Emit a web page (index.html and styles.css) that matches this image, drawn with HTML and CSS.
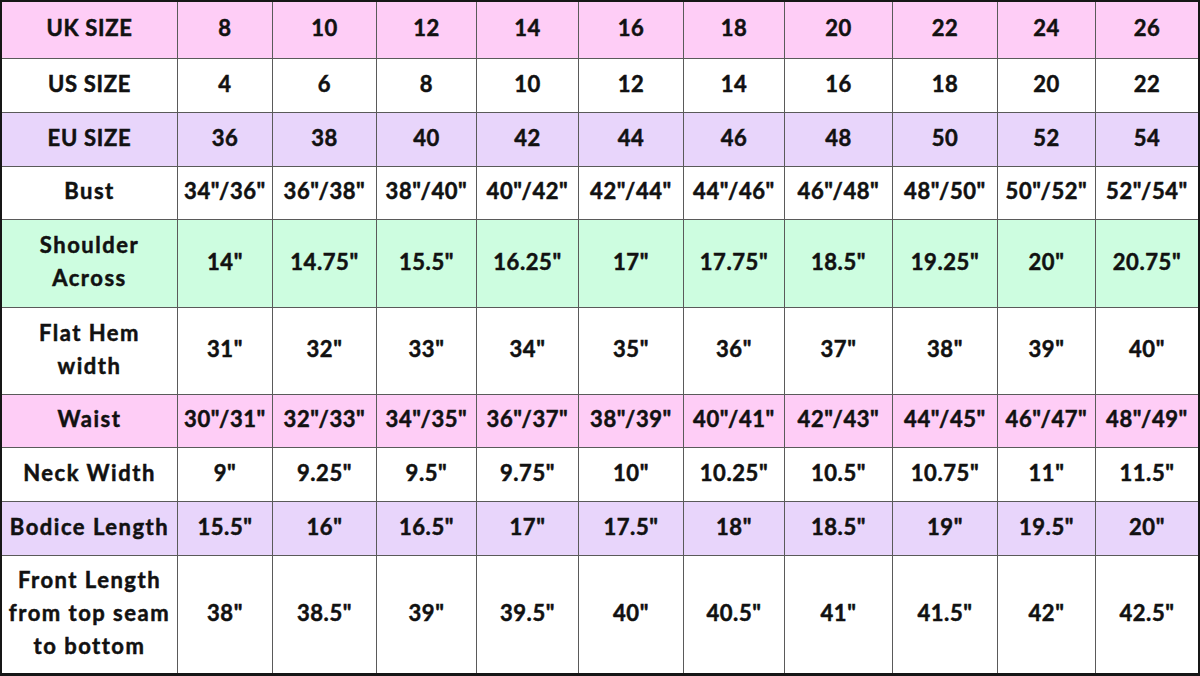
FILE: index.html
```html
<!DOCTYPE html>
<html lang="en">
<head>
<meta charset="utf-8">
<title>Size Chart</title>
<link rel="stylesheet" href="styles.css">
</head>
<body>
<div class="chart">
  <div class="cell label caps pink">UK SIZE</div>
  <div class="cell pink">8</div><div class="cell pink">10</div><div class="cell pink">12</div><div class="cell pink">14</div><div class="cell pink">16</div><div class="cell pink">18</div><div class="cell pink">20</div><div class="cell pink">22</div><div class="cell pink">24</div><div class="cell pink">26</div>

  <div class="cell label caps">US SIZE</div>
  <div class="cell">4</div><div class="cell">6</div><div class="cell">8</div><div class="cell">10</div><div class="cell">12</div><div class="cell">14</div><div class="cell">16</div><div class="cell">18</div><div class="cell">20</div><div class="cell">22</div>

  <div class="cell label caps lav">EU SIZE</div>
  <div class="cell lav">36</div><div class="cell lav">38</div><div class="cell lav">40</div><div class="cell lav">42</div><div class="cell lav">44</div><div class="cell lav">46</div><div class="cell lav">48</div><div class="cell lav">50</div><div class="cell lav">52</div><div class="cell lav">54</div>

  <div class="cell label">Bust</div>
  <div class="cell">34"/36"</div><div class="cell">36"/38"</div><div class="cell">38"/40"</div><div class="cell">40"/42"</div><div class="cell">42"/44"</div><div class="cell">44"/46"</div><div class="cell">46"/48"</div><div class="cell">48"/50"</div><div class="cell">50"/52"</div><div class="cell">52"/54"</div>

  <div class="cell label green">Shoulder<br>Across</div>
  <div class="cell green">14"</div><div class="cell green">14.75"</div><div class="cell green">15.5"</div><div class="cell green">16.25"</div><div class="cell green">17"</div><div class="cell green">17.75"</div><div class="cell green">18.5"</div><div class="cell green">19.25"</div><div class="cell green">20"</div><div class="cell green">20.75"</div>

  <div class="cell label">Flat Hem<br>width</div>
  <div class="cell">31"</div><div class="cell">32"</div><div class="cell">33"</div><div class="cell">34"</div><div class="cell">35"</div><div class="cell">36"</div><div class="cell">37"</div><div class="cell">38"</div><div class="cell">39"</div><div class="cell">40"</div>

  <div class="cell label pink">Waist</div>
  <div class="cell pink">30"/31"</div><div class="cell pink">32"/33"</div><div class="cell pink">34"/35"</div><div class="cell pink">36"/37"</div><div class="cell pink">38"/39"</div><div class="cell pink">40"/41"</div><div class="cell pink">42"/43"</div><div class="cell pink">44"/45"</div><div class="cell pink">46"/47"</div><div class="cell pink">48"/49"</div>

  <div class="cell label">Neck Width</div>
  <div class="cell">9"</div><div class="cell">9.25"</div><div class="cell">9.5"</div><div class="cell">9.75"</div><div class="cell">10"</div><div class="cell">10.25"</div><div class="cell">10.5"</div><div class="cell">10.75"</div><div class="cell">11"</div><div class="cell">11.5"</div>

  <div class="cell label lav">Bodice Length</div>
  <div class="cell lav">15.5"</div><div class="cell lav">16"</div><div class="cell lav">16.5"</div><div class="cell lav">17"</div><div class="cell lav">17.5"</div><div class="cell lav">18"</div><div class="cell lav">18.5"</div><div class="cell lav">19"</div><div class="cell lav">19.5"</div><div class="cell lav">20"</div>

  <div class="cell label">Front Length<br>from top seam<br>to bottom</div>
  <div class="cell">38"</div><div class="cell">38.5"</div><div class="cell">39"</div><div class="cell">39.5"</div><div class="cell">40"</div><div class="cell">40.5"</div><div class="cell">41"</div><div class="cell">41.5"</div><div class="cell">42"</div><div class="cell">42.5"</div>
</div>
</body>
</html>
```

FILE: styles.css
```css
html, body {
  margin: 0;
  padding: 0;
  background: #ffffff;
}

.chart {
  box-sizing: border-box;
  width: 1200px;
  height: 676px;
  border-style: solid;
  border-color: #161616;
  border-width: 2px 2px 3px 2px;
  background: #5a5a5a;
  display: grid;
  grid-template-columns: 175px 94px 103px 99px 101px 104px 100px 107px 104px 97px 102px;
  grid-template-rows: 56px 53px 53px 52px 87px 86px 52px 53px 53px 117px;
  gap: 1px;
  font-family: "Lato", "Open Sans", sans-serif;
  font-weight: 700;
  font-size: 22px;
  color: #111111;
  -webkit-text-stroke: 0.5px #111111;
}

.cell {
  box-sizing: border-box;
  background: #ffffff;
  display: flex;
  align-items: center;
  justify-content: center;
  text-align: center;
  line-height: 33px;
  letter-spacing: 0.6px;
  white-space: nowrap;
  padding-bottom: 5px;
}

.label {
  letter-spacing: 1.5px;
}

.label.caps {
  letter-spacing: 0.7px;
}

.pink { background: #fecdf6; }
.lav { background: #e8d5fb; }
.green { background: #cdfde0; }
```
